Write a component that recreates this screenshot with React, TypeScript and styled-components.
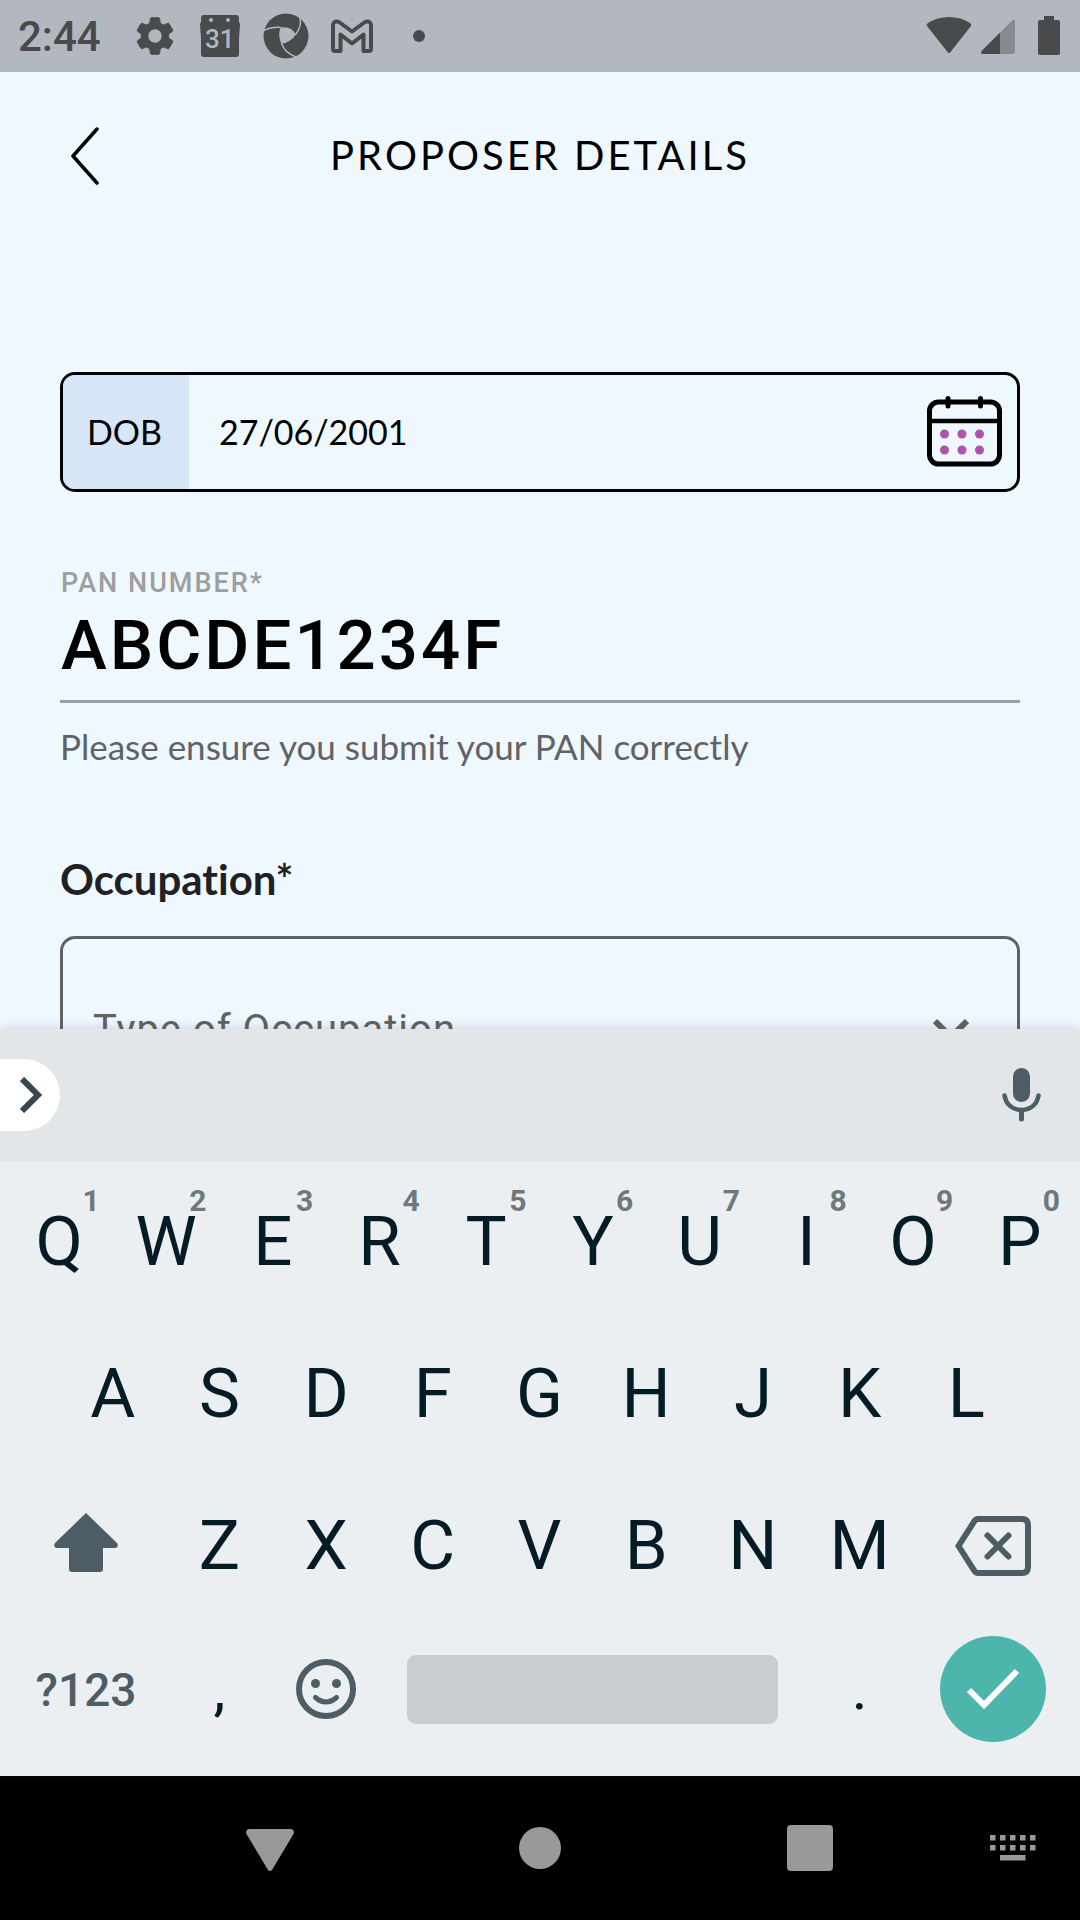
import React, { useState } from "react";
import styled, { createGlobalStyle } from "styled-components";

const color = {
  page: "#eff7ff",
  status: "#b3b7bf",
  statusInk: "#484a4c",
  strip: "#e2e6e9",
  keys: "#ebeff2",
  keyInk: "#051c26",
  keyIcon: "#4d5d65",
  accent: "#4db6ac",
};
const humanist = `Lato, "Noto Sans", sans-serif`;
const roboto = `Roboto, "Noto Sans", sans-serif`;

const GlobalStyle = createGlobalStyle`
  *, *::before, *::after { box-sizing: border-box; }
  body { margin: 0; background: ${color.page}; font-family: ${roboto}; font-variant-ligatures: none; }
  button, input, select { font: inherit; color: inherit; margin: 0; padding: 0; border: 0; background: none; outline: none; border-radius: 0; }
  button { cursor: pointer; }
  svg { display: block; }
`;

const Screen = styled.div`
  display: flex;
  flex-direction: column;
  height: 100vh;
  background: ${color.page};
`;

const StatusBar = styled.div`
  flex: none;
  display: flex;
  align-items: center;
  justify-content: space-between;
  height: 72px;
  padding: 0 20px 0 18px;
  background: ${color.status};
  color: ${color.statusInk};
`;

const StatusGroup = styled.div<{ $gap: number }>`
  display: flex;
  align-items: center;
  gap: ${(p) => p.$gap}px;
`;

const Clock = styled.time`
  margin-right: 10px;
  padding-top: 2px;
  font-size: 42px;
  font-weight: 500;
  line-height: 48px;
`;

const DotSlot = styled.span`
  padding-left: 18px;
`;

const BatterySlot = styled.span`
  padding-left: 14px;
`;

const AppBar = styled.header`
  flex: none;
  display: grid;
  grid-template-columns: 98px 1fr 98px;
  align-items: center;
  height: 168px;
  padding: 0 36px;
`;

const BackButton = styled.button`
  display: flex;
  align-items: center;
  justify-content: center;
  height: 96px;
`;

const Title = styled.h1`
  margin: 0;
  padding-bottom: 2px;
  color: #000;
  font-family: ${humanist};
  font-size: 40px;
  font-weight: 400;
  line-height: 48px;
  letter-spacing: 3px;
  text-align: center;
`;

const Form = styled.form`
  flex: 1;
  min-height: 0;
  overflow-y: auto;
  scrollbar-width: none;
  padding: 132px 60px 0;
`;

const DateField = styled.div`
  display: flex;
  height: 120px;
  border: 3px solid #000;
  border-radius: 15px;
  overflow: hidden;
  color: #000;
  font-family: ${humanist};
  font-size: 34px;
`;

const DateTag = styled.label`
  flex: none;
  display: flex;
  align-items: center;
  width: 126px;
  padding: 0 0 2px 24px;
  background: #d6e6f6;
`;

const DateInput = styled.input`
  flex: 1;
  min-width: 0;
  padding: 0 0 2px 30px;
`;

const DateButton = styled.button`
  flex: none;
  padding: 0 15px 2px;
`;

const PanField = styled.div`
  margin-top: 75px;
  border-bottom: 3px solid #9e9e9e;
`;

const PanLabel = styled.label`
  display: block;
  margin-bottom: 10px;
  padding-left: 1px;
  color: #9e9e9e;
  font-size: 27px;
  font-weight: 500;
  line-height: 32px;
  letter-spacing: 2px;
`;

const PanInput = styled.input`
  display: block;
  width: 100%;
  height: 91px;
  padding: 0 0 19px 1px;
  color: #000;
  font-size: 69px;
  font-weight: 500;
  line-height: 72px;
  letter-spacing: 3px;
`;

const Helper = styled.p`
  margin: 23px 0 0;
  color: #5f6266;
  font-family: ${humanist};
  font-size: 35px;
  line-height: 40px;
`;

const OccupationLabel = styled.label`
  display: block;
  margin: 89px 0 33px;
  color: #202124;
  font-family: ${humanist};
  font-size: 42px;
  font-weight: 700;
  line-height: 48px;
`;

const SelectBox = styled.div`
  display: grid;
  height: 186px;
  align-items: stretch;
  border: 3px solid #616161;
  border-radius: 15px;
  color: #616161;

  & > * { grid-area: 1 / 1; }
  svg { justify-self: end; align-self: center; margin-right: 48px; pointer-events: none; }
`;

const Select = styled.select`
  appearance: none;
  width: 100%;
  padding: 0 96px 0 30px;
  font-size: 40px;
  letter-spacing: 1px;
`;

const Keyboard = styled.section`
  flex: none;
  position: relative;
  background: ${color.keys};
  box-shadow: 0 -1px 9px rgba(60, 80, 100, 0.2);
`;

const Strip = styled.div`
  display: flex;
  align-items: center;
  justify-content: space-between;
  height: 132px;
  padding-right: 39px;
  background: ${color.strip};
`;

const ExpandButton = styled.button`
  display: flex;
  align-items: center;
  width: 60px;
  height: 72px;
  padding-left: 20px;
  border-radius: 0 36px 36px 0;
  background: #fff;
`;

const Keys = styled.div`
  padding: 5px 7px 20px 6px;
`;

const KeyRow = styled.div<{ $inset?: boolean; $short?: boolean }>`
  display: flex;
  height: ${(p) => (p.$short ? 134 : 152)}px;
  padding: 0 ${(p) => (p.$inset ? "5%" : "0")};
`;

const Key = styled.button<{ $span?: number }>`
  position: relative;
  flex: ${(p) => p.$span ?? 1} 1 0;
  min-width: 0;
  display: flex;
  align-items: center;
  justify-content: center;
  color: ${color.keyInk};
  font-size: 69px;
  line-height: 80px;
`;

const Hint = styled.span`
  position: absolute;
  top: 17px;
  right: 13px;
  color: #6e797e;
  font-size: 30px;
  font-weight: 700;
  line-height: 36px;
`;

const SymbolsKey = styled(Key)`
  padding-top: 2px;
  color: ${color.keyIcon};
  font-size: 46px;
  font-weight: 500;
`;

const PunctuationKey = styled(Key)`
  font-size: 60px;
`;

const SpaceBar = styled.span`
  width: 100%;
  height: 69px;
  margin: 0 28px;
  border-radius: 9px;
  background: #c9cdd0;
`;

const DoneDisc = styled.span`
  display: flex;
  align-items: center;
  justify-content: center;
  width: 106px;
  height: 106px;
  border-radius: 50%;
  background: ${color.accent};
`;

const NavBar = styled.nav`
  flex: none;
  display: grid;
  grid-template-columns: 2fr 2fr 2fr 1fr;
  height: 144px;
  padding-left: 12.5%;
  background: #000;
`;

const NavButton = styled.button`
  display: flex;
  align-items: center;
  justify-content: center;
  color: #999;
`;

const GearIcon = () => (
  <svg width="44" height="44" viewBox="0 0 24 24" fill="currentColor" stroke="currentColor" strokeWidth=".5" aria-hidden="true">
    <path d="M19.43 12.98c.04-.32.07-.64.07-.98s-.03-.66-.07-.98l2.110-1.650c.19-.15.24-.42.12-.64l-2-3.460c-.12-.22-.39-.3-.61-.22l-2.490 1c-.52-.4-1.080-.73-1.690-.98l-.38-2.650A.49.49 0 0 0 14 2h-4c-.25 0-.46.18-.49.42l-.38 2.650c-.61.25-1.170.59-1.690.98l-2.490-1c-.23-.09-.49 0-.61.22l-2 3.460c-.13.22-.07.49.12.64l2.110 1.650c-.04.32-.07.65-.07.98s.03.66.07.98l-2.110 1.650c-.19.15-.24.42-.12.64l2 3.460c.12.22.39.3.61.22l2.490-1c.52.4 1.080.73 1.690.98l.38 2.650c.03.24.24.42.49.42h4c.25 0 .46-.18.49-.42l.38-2.650c.61-.25 1.170-.59 1.690-.98l2.490 1c.23.09.49 0 .61-.22l2-3.460c.12-.22.07-.49-.12-.64l-2.110-1.650zM12 15.900a3.900 3.900 0 1 1 0-7.800 3.900 3.900 0 0 1 0 7.800z" />
  </svg>
);

const DayBadge = styled.span`
  display: grid;
  place-items: center;
  color: ${color.status};
  font-size: 26px;
  font-weight: 500;
  line-height: 28px;

  & > * { grid-area: 1 / 1; }
  span { padding-top: 6px; }
`;

const DayIcon = () => (
  <DayBadge>
    <svg width="42" height="42" viewBox="0 0 42 42" aria-hidden="true">
      <path fill={color.statusInk} d="M5 0h32q3 0 3 3v4l1 2-1 15v15q0 3-3 3H5q-3 0-3-3V24L1 9l1-2V3q0-3 3-3z" />
      <circle cx="12" cy="5" r="2" fill={color.status} />
      <circle cx="29" cy="5" r="2" fill={color.status} />
    </svg>
    <span>31</span>
  </DayBadge>
);

const ShutterIcon = () => (
  <svg width="46" height="46" viewBox="0 0 46 46" aria-hidden="true">
    <circle cx="23" cy="23" r="22.5" fill={color.statusInk} />
    <path fill={color.status} d="M17.500 14.500Q28 12.500 33 21.500 28 29 18.500 31 14.500 23 17.500 14.500z" />
    <g fill="none" stroke={color.status} strokeWidth="1.5">
      <path d="M0 18q8-4.500 18-3.500" />
      <path d="M32.500 21.500Q39 14 37 4" />
      <path d="M18.500 30.500Q22 40 33 44" />
    </g>
  </svg>
);

const MailIcon = () => (
  <svg width="42" height="34" viewBox="0 0 42 34" fill="none" stroke="currentColor" strokeWidth="4" strokeLinejoin="round" aria-hidden="true">
    <path d="M2 6v24q0 2 2 2h5.500V15.500L21 24.500l11.500-9V32H38q2 0 2-2V6q-1-5-6-3L21 12.500 8 3Q3 1 2 6z" />
  </svg>
);

const DotIcon = () => (
  <svg width="12" height="12" viewBox="0 0 12 12" fill="currentColor" aria-hidden="true">
    <circle cx="6" cy="6" r="6" />
  </svg>
);

const WifiIcon = () => (
  <svg width="46" height="40" viewBox="0 0 46 40" fill="currentColor" aria-hidden="true">
    <path d="M1 10Q0 8 2 7 11 1 23 1t21 6q2 1 1 3L24.500 36q-1.500 2-3 0z" />
  </svg>
);

const SignalIcon = () => (
  <svg width="34" height="40" viewBox="0 0 34 40" aria-hidden="true">
    <path fill="#868b8f" d="M19 17 31 4.500q3-2 3 1V36q0 2-2 2H19z" />
    <path fill="currentColor" d="M19 16.500V38H2q-3 0-1.500-3z" />
  </svg>
);

const BatteryIcon = () => (
  <svg width="22" height="40" viewBox="0 0 22 40" fill="currentColor" aria-hidden="true">
    <path d="M6 0h10v4h4q2 0 2 2v31q0 2-2 2H2q-2 0-2-2V6q0-2 2-2h4z" />
  </svg>
);

const BackIcon = () => (
  <svg width="28" height="58" viewBox="0 0 28 58" fill="none" stroke="#000" strokeWidth="3.5" strokeLinecap="round" strokeLinejoin="round" aria-hidden="true">
    <path d="M26 2 2 29l24 27" />
  </svg>
);

const CalendarIcon = () => (
  <svg width="75" height="72" viewBox="0 0 75 72" fill="none" stroke="#000" strokeLinecap="round" aria-hidden="true">
    <rect x="2.500" y="7" width="70" height="62" rx="9" strokeWidth="5" />
    <path strokeWidth="4.500" d="M3 26h69" />
    <path strokeWidth="5" d="M21 3.500v7.500M53.500 3.500v7.500" />
    <g fill="#b052b0" stroke="none">
      {[39, 55].map((cy) => [17.5, 35, 52.5].map((cx) => <circle key={`${cx}-${cy}`} cx={cx} cy={cy} r="4.500" />))}
    </g>
  </svg>
);

const DownIcon = () => (
  <svg width="36" height="24" viewBox="0 0 36 24" fill="none" stroke="#616161" strokeWidth="6" aria-hidden="true">
    <path d="m2 4 16 16L34 4" />
  </svg>
);

const ExpandIcon = () => (
  <svg width="22" height="36" viewBox="0 0 22 36" fill="none" stroke="#37474f" strokeWidth="6" aria-hidden="true">
    <path d="m2 2 16 16L2 34" />
  </svg>
);

const MicIcon = () => (
  <svg width="39" height="54" viewBox="0 0 39 54" fill="none" stroke={color.keyIcon} strokeLinecap="round" aria-hidden="true">
    <rect x="11" y="0" width="17" height="34" rx="8.500" fill={color.keyIcon} stroke="none" />
    <path strokeWidth="4.500" d="M2.500 27.500C4 36 10 42 19.500 42S35 36 36.500 27.500" />
    <path strokeWidth="5" d="M19.500 43v8" />
  </svg>
);

const ShiftIcon = () => (
  <svg width="64" height="66" viewBox="0 0 64 66" fill={color.keyIcon} aria-hidden="true">
    <path d="M32 0 63 30q2 3-1 5H49v21q0 3-3 3H18q-3 0-3-3V35H2q-3-2-1-5z" />
  </svg>
);

const DeleteIcon = () => (
  <svg width="76" height="60" viewBox="0 0 76 60" fill="none" stroke={color.keyIcon} strokeWidth="6" strokeLinecap="round" aria-hidden="true">
    <path d="M23 3h44q6 0 6 6v42q0 6-6 6H23q-2 0-3.500-2L3.500 30l16-25Q21 3 23 3z" />
    <path d="m32.500 19.500 21 21M53.500 19.500l-21 21" />
  </svg>
);

const SmileIcon = () => (
  <svg width="60" height="60" viewBox="0 0 60 60" fill="none" stroke={color.keyIcon} aria-hidden="true">
    <circle cx="30" cy="30" r="27" strokeWidth="6" />
    <path d="M19.500 38.500q10.500 9 21 0" strokeWidth="5" strokeLinecap="round" />
    <circle cx="19.500" cy="24.500" r="4.500" fill={color.keyIcon} stroke="none" />
    <circle cx="40.500" cy="24.500" r="4.500" fill={color.keyIcon} stroke="none" />
  </svg>
);

const CheckIcon = () => (
  <svg width="54" height="42" viewBox="0 0 54 42" fill="none" stroke="#fff" strokeWidth="6" aria-hidden="true">
    <path d="m3 22 15 15L51 3" />
  </svg>
);

const NavBackIcon = () => (
  <svg width="48" height="46" viewBox="0 0 48 46" fill="currentColor" aria-hidden="true">
    <path d="M3 4h42q4 1 2.500 5L26 45q-2 2-4 0L.5 9Q-1 5 3 4z" />
  </svg>
);

const HomeIcon = () => (
  <svg width="42" height="42" viewBox="0 0 42 42" fill="currentColor" aria-hidden="true">
    <circle cx="21" cy="21" r="21" />
  </svg>
);

const RecentsIcon = () => (
  <svg width="46" height="46" viewBox="0 0 46 46" fill="currentColor" aria-hidden="true">
    <rect width="46" height="46" rx="4" />
  </svg>
);

const ImeIcon = () => (
  <svg width="46" height="26" viewBox="0 0 46 26" fill="currentColor" aria-hidden="true">
    {[0, 10].map((y) => [0, 10, 20, 30, 40].map((x) => <rect key={`${x}-${y}`} x={x} y={y} width="5.5" height="5.5" />))}
    <rect x="10" y="20" width="25.5" height="5.5" />
  </svg>
);

const topRow = [..."QWERTYUIOP"];
const homeRow = [..."ASDFGHJKL"];
const bottomRow = [..."ZXCVBNM"];

export default function App() {
  const [pan, setPan] = useState("ABCDE1234F");
  const [dob, setDob] = useState("27/06/2001");
  const type = (ch: string) => setPan((v) => v + ch);

  return (
    <Screen>
      <GlobalStyle />
      <StatusBar>
        <StatusGroup $gap={22}>
          <Clock>2:44</Clock>
          <GearIcon />
          <DayIcon />
          <ShutterIcon />
          <MailIcon />
          <DotSlot>
            <DotIcon />
          </DotSlot>
        </StatusGroup>
        <StatusGroup $gap={9}>
          <WifiIcon />
          <SignalIcon />
          <BatterySlot>
            <BatteryIcon />
          </BatterySlot>
        </StatusGroup>
      </StatusBar>

      <AppBar>
        <BackButton type="button" aria-label="Back">
          <BackIcon />
        </BackButton>
        <Title>PROPOSER DETAILS</Title>
      </AppBar>

      <Form onSubmit={(e) => e.preventDefault()}>
        <DateField>
          <DateTag htmlFor="dob">DOB</DateTag>
          <DateInput id="dob" value={dob} onChange={(e) => setDob(e.target.value)} />
          <DateButton type="button" aria-label="Pick a date">
            <CalendarIcon />
          </DateButton>
        </DateField>

        <PanField>
          <PanLabel htmlFor="pan">PAN NUMBER*</PanLabel>
          <PanInput id="pan" value={pan} onChange={(e) => setPan(e.target.value)} aria-describedby="pan-help" />
        </PanField>
        <Helper id="pan-help">Please ensure you submit your PAN correctly</Helper>

        <OccupationLabel htmlFor="occupation">Occupation*</OccupationLabel>
        <SelectBox>
          <Select id="occupation" defaultValue="">
            <option value="">Type of Occupation</option>
          </Select>
          <DownIcon />
        </SelectBox>
      </Form>

      <Keyboard aria-label="Keyboard">
        <Strip>
          <ExpandButton type="button" aria-label="Expand toolbar">
            <ExpandIcon />
          </ExpandButton>
          <button type="button" aria-label="Voice input">
            <MicIcon />
          </button>
        </Strip>
        <Keys>
          <KeyRow>
            {topRow.map((ch, i) => (
              <Key key={ch} type="button" onClick={() => type(ch)}>
                {ch}
                <Hint>{(i + 1) % 10}</Hint>
              </Key>
            ))}
          </KeyRow>
          <KeyRow $inset>
            {homeRow.map((ch) => (
              <Key key={ch} type="button" onClick={() => type(ch)}>
                {ch}
              </Key>
            ))}
          </KeyRow>
          <KeyRow>
            <Key type="button" $span={1.5} aria-label="Shift">
              <ShiftIcon />
            </Key>
            {bottomRow.map((ch) => (
              <Key key={ch} type="button" onClick={() => type(ch)}>
                {ch}
              </Key>
            ))}
            <Key type="button" $span={1.5} aria-label="Delete" onClick={() => setPan((v) => v.slice(0, -1))}>
              <DeleteIcon />
            </Key>
          </KeyRow>
          <KeyRow $short>
            <SymbolsKey type="button" $span={1.5}>
              ?123
            </SymbolsKey>
            <PunctuationKey type="button">,</PunctuationKey>
            <Key type="button" aria-label="Emoji">
              <SmileIcon />
            </Key>
            <Key type="button" $span={4} aria-label="Space">
              <SpaceBar />
            </Key>
            <PunctuationKey type="button">.</PunctuationKey>
            <Key type="button" $span={1.5} aria-label="Done">
              <DoneDisc>
                <CheckIcon />
              </DoneDisc>
            </Key>
          </KeyRow>
        </Keys>
      </Keyboard>

      <NavBar aria-label="System navigation">
        <NavButton type="button" aria-label="Hide keyboard">
          <NavBackIcon />
        </NavButton>
        <NavButton type="button" aria-label="Home">
          <HomeIcon />
        </NavButton>
        <NavButton type="button" aria-label="Recent apps">
          <RecentsIcon />
        </NavButton>
        <NavButton type="button" aria-label="Switch keyboard">
          <ImeIcon />
        </NavButton>
      </NavBar>
    </Screen>
  );
}
